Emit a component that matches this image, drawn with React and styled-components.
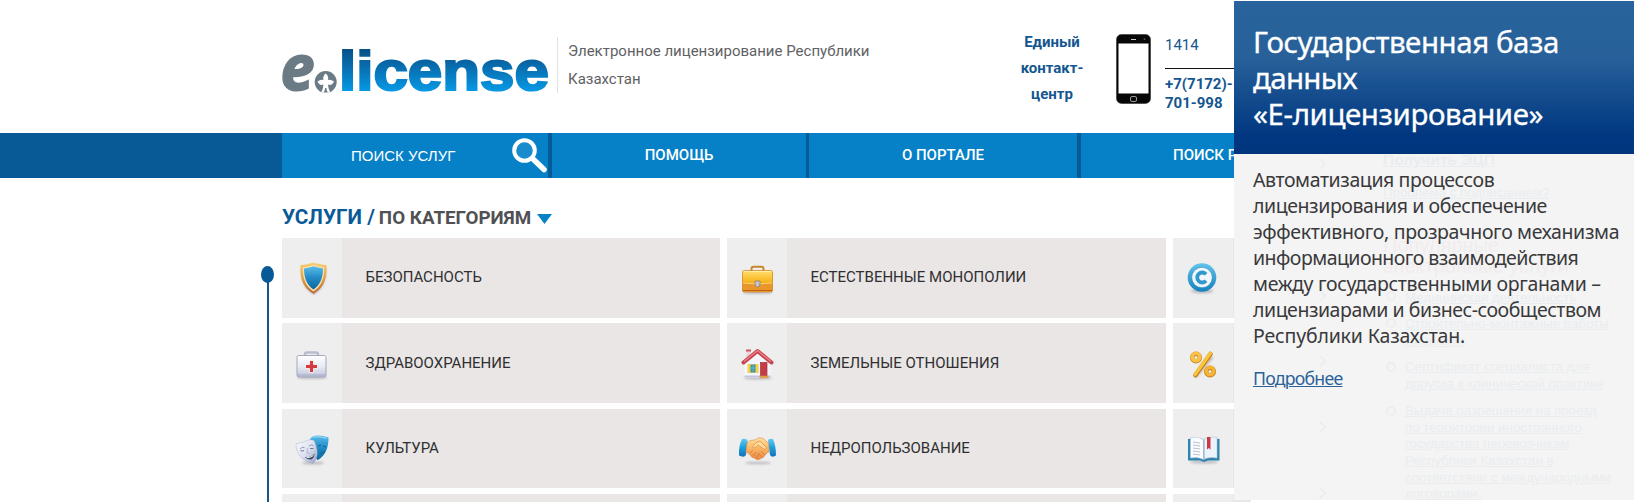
import React from "react";
import styled, { createGlobalStyle } from "styled-components";

const Global = createGlobalStyle`
  * { box-sizing: border-box; }
  html, body { margin: 0; padding: 0; }
  body { background: #fff; overflow: hidden; font-family: Roboto, "Liberation Sans", sans-serif; }
`;

const Page = styled.div`
  position: relative;
  width: 1634px;
  height: 502px;
  overflow: hidden;
  background: #fff;
`;

const Header = styled.header`
  display: flex;
  height: 133px;
  padding-left: 278px;
`;

const LogoSvg = styled.svg`
  flex: none;
  width: 279px;
  height: 60px;
  margin-top: 37px;
  overflow: visible;
`;

const Tagline = styled.p`
  width: 430px;
  height: 56px;
  margin: 37px 0 0;
  padding-left: 10px;
  border-left: 1px solid #e2e2e2;
  color: #616163;
  font-size: 15px;
  line-height: 28px;
`;

const TaglineLine = styled.span`
  display: block;
  white-space: nowrap;
`;

const ContactTitle = styled.div`
  width: 130px;
  margin-top: 29px;
  color: #14568f;
  font-size: 15px;
  font-weight: 700;
  line-height: 26px;
  text-align: center;
`;

const PhoneSvg = styled.svg`
  flex: none;
  width: 35px;
  height: 70px;
  margin: 34px 14px 0 -1px;
`;

const Numbers = styled.div`
  width: 90px;
  margin-top: 27px;
  color: #14568f;
`;

const ShortNumber = styled.div`
  height: 42px;
  border-bottom: 1px solid #111;
  font-size: 15px;
  line-height: 36px;
`;

const LongNumber = styled.div`
  padding-top: 6px;
  font-size: 15px;
  font-weight: 700;
  line-height: 19px;
`;

const Nav = styled.nav`
  display: flex;
  height: 45px;
  padding-left: 282px;
  background: #075a96;
`;

const NavItem = styled.a`
  display: flex;
  flex: none;
  align-items: center;
  justify-content: ${(p) => (p.$start ? "flex-start" : "center")};
  width: ${(p) => p.$width}px;
  margin-right: ${(p) => p.$gap}px;
  padding-left: ${(p) => p.$start || 0}px;
  padding-bottom: 1px;
  background: #0681c8;
  color: #fff;
  font-size: 15px;
  font-weight: 500;
  white-space: nowrap;
`;

const SearchItem = styled(NavItem)`
  padding-bottom: 0;
  padding-left: 69px;
  justify-content: space-between;
  font-family: "Liberation Sans", sans-serif;
  font-weight: 400;
`;

const Lens = styled.svg`
  width: 40px;
  height: 45px;
`;

const Main = styled.main`
  display: flex;
`;

const Timeline = styled.svg`
  flex: none;
  width: 22px;
  height: 324px;
  margin-left: 260px;
`;

const Content = styled.section`
  flex: none;
`;

const Title = styled.h1`
  display: flex;
  align-items: baseline;
  height: 60px;
  margin: 0;
  color: #0b5a98;
  font-size: 20.7px;
  font-weight: 700;
  line-height: 78px;
  white-space: nowrap;
`;

const TitleFilter = styled.span`
  margin-left: 4px;
  color: #505154;
  font-size: 18.8px;
`;

const Arrow = styled.svg`
  width: 15px;
  height: 10px;
  margin-left: 6px;
`;

const Grid = styled.div`
  display: grid;
  grid-template-columns: 438px 439px 78px;
  grid-template-rows: 80px 81px 80px 80px;
  column-gap: 7px;
  row-gap: 5px;
  height: 264px;
  overflow: hidden;
`;

const Card = styled.div`
  display: flex;
  height: ${(p) => p.$h || 80}px;
  background: #e9e6e5;
  overflow: hidden;
`;

const CardIcon = styled.svg`
  flex: none;
  width: 60px;
  height: 80px;
  background: #eee;
`;

const CardLabel = styled.span`
  padding-left: 23.5px;
  color: #2f2f31;
  font-size: 15px;
  line-height: ${(p) => p.$lh || 78}px;
  white-space: nowrap;
`;

const Panel = styled.aside`
  position: absolute;
  top: 1px;
  left: 1234px;
  width: 400px;
  height: 499px;
  overflow: hidden;
  background: #f4f4f4;
  font-family: "Noto Sans", sans-serif;
`;

const PanelTitle = styled.h2`
  height: 153px;
  margin: 0;
  padding: 23px 0 0 19px;
  background: linear-gradient(#28639c 0%, #28619a 36%, #003780 88%, #00357d 100%);
  color: #fff;
  font-size: 29.5px;
  font-weight: 400;
  line-height: 36px;
  -webkit-text-stroke: 0.3px #fff;
`;

const Line = styled.span`
  display: block;
  letter-spacing: ${(p) => p.$ls || 0}px;
  white-space: nowrap;
`;

const PanelBody = styled.div`
  position: relative;
  height: 346px;
`;

const PanelText = styled.p`
  position: relative;
  margin: 0;
  padding: 13px 0 0 19px;
  color: #39393b;
  font-size: 19.5px;
  line-height: 26px;
`;

const More = styled.a`
  position: relative;
  display: inline-block;
  margin: 16px 0 0 19px;
  color: #2a6299;
  font-size: 17.7px;
  line-height: 26px;
  letter-spacing: -0.75px;
  text-decoration: underline;
  text-decoration-thickness: 1px;
`;

const Backdrop = styled.div`
  position: absolute;
  inset: -3px 0 0 0;
  padding: 0 0 0 149px;
  font-family: "Liberation Sans", sans-serif;
  white-space: nowrap;
`;

const FaintLine = styled.div`
  height: ${(p) => p.$h}px;
  padding-left: ${(p) => p.$indent || 0}px;
  color: ${(p) => p.$color || "#eaedf0"};
  font-size: ${(p) => p.$size || 13.3}px;
  font-weight: ${(p) => (p.$bold ? 700 : 400)};
  line-height: 17px;
  text-decoration: ${(p) => (p.$plain ? "none" : "underline")};
`;

const FaintMarks = styled.svg`
  position: absolute;
  top: 0;
  left: 0;
`;

const stops = (id, colors, x2 = 0, y2 = 1) => (
  <linearGradient id={id} x1="0" y1="0" x2={x2} y2={y2}>
    {colors.map((c, i) => (
      <stop key={i} offset={i / (colors.length - 1)} stopColor={c} />
    ))}
  </linearGradient>
);

function Defs() {
  return (
    <defs>
      {stops("gold", ["#ffdf70", "#f8b61d", "#d98511"])}
      {stops("rim", ["#f8cf75", "#e2a041", "#b76a3a"])}
      {stops("sky", ["#58bdeb", "#2289c6", "#0b679e"])}
      {stops("ring", ["#62c4ed", "#1681bd"])}
      {stops("silver", ["#ffffff", "#e8ebf5", "#bfc4d9"])}
      {stops("mask", ["#fbfbff", "#dde2f0", "#94a1c2"], 1, 1)}
      {stops("cuff", ["#68c8f0", "#1aa0dc", "#1b6fb8"])}
      {stops("skin", ["#ffe2a0", "#f9b564", "#e88842"])}
      <filter id="soft" x="-30%" y="-80%" width="160%" height="260%">
        <feGaussianBlur stdDeviation="1.1" />
      </filter>
    </defs>
  );
}

const Shadow = ({ cx, cy, rx, ry = 1.6 }) => (
  <ellipse cx={cx} cy={cy} rx={rx} ry={ry} fill="#8b8b99" opacity=".5" filter="url(#soft)" />
);

const icons = {
  shield: (
    <>
      <path d="M20 29Q31 24 44 29C45 42 41 51 32 57C22 51 18 42 20 29Z" fill="#a9a7b4" opacity=".6" filter="url(#soft)" />
      <path d="M18.500 27C23 27 27 26 31.500 24.500C36 26 40 27 44.500 27C45.500 41 41.500 50 31.500 56C21.500 50 17.500 41 18.500 27Z" fill="url(#rim)" />
      <path d="M20.800 29.200C25 29 28.500 28 31.500 26.800C34.500 28 38 29 42.200 29.200C42.700 40.500 39 48.500 31.500 53.500C24 48.500 20.300 40.500 20.800 29.200Z" fill="#f8dfae" />
      <path d="M22 30.500C26 30 28.500 29.500 31.500 28.300C34.500 29.500 37 30 41 30.500C41 40 38 47 31.500 51.600C25 47 22 40 22 30.500Z" fill="url(#sky)" />
    </>
  ),
  medkit: (
    <>
      <Shadow cx={30} cy={54.5} rx={15} />
      <path d="M23 33V31Q23 29.500 25 29.500H34Q36 29.500 36 31V33" fill="none" stroke="#b9bdcd" strokeWidth="2.400" />
      <rect x="15" y="32.500" width="29" height="21.500" rx="2" fill="url(#silver)" stroke="#9a9fb7" strokeWidth=".9" />
      <path d="M16 33.500H43" stroke="#fff" />
      <path d="M27.500 37.500H31.500V41.500H35.500V45.500H31.500V49.500H27.500V45.500H23.500V41.500H27.500Z" fill="#d23b41" stroke="#fff" strokeWidth=".8" />
      <path d="M15.500 52H43.500" stroke="#a3a9c4" />
    </>
  ),
  masks: (
    <>
      <Shadow cx={31} cy={54} rx={11} />
      <path d="M28 30C31 25 39 26 46.500 28.500C46.500 38 44 46 36 51C29 48 26 39 28 30Z" fill="url(#sky)" />
      <path d="M31 28.500Q36 26.500 44.500 29.500" fill="none" stroke="#a1ddf6" />
      <path d="M36 37L39 36M41 37L44 38M38 45Q41 42 43 43" stroke="#10628f" fill="none" />
      <path d="M14 35C17 33.500 20 34 23 32.500C26 31 29 30 32 31.500C35 38 38 48 31 54.500C22 53 14 46 14 35Z" fill="url(#mask)" stroke="#9aa5c2" strokeWidth=".4" />
      <path d="M18 40Q20 37.500 22.500 38.500M27 37Q29 35 31.500 36.500" fill="none" stroke="#8a94b0" strokeWidth=".9" />
      <path d="M18.500 41.800H22M28 39.500H31.500" fill="none" stroke="#6d7896" strokeWidth="1" />
      <path d="M25.500 39L25 44L27.500 44" fill="none" stroke="#a0abc6" strokeWidth=".7" />
      <path d="M23 48C27 48.500 30 47.500 32.500 44.500C32.500 48 30.500 50.500 28.500 50.500C26 50.500 24 49.500 23 48Z" fill="#384560" />
      <path d="M24.500 48.600Q28.500 49 31.500 46.500" stroke="#fff" strokeWidth=".9" fill="none" />
    </>
  ),
  briefcase: (
    <>
      <Shadow cx={30.5} cy={54.5} rx={15} />
      <path d="M24.500 33V31Q24.500 28.800 26.500 28.800H34.500Q36.500 28.800 36.500 31V33" fill="none" stroke="#c8872a" strokeWidth="2" />
      <rect x="15.500" y="32.500" width="30" height="21.500" rx="1.800" fill="url(#gold)" stroke="#cb7d17" strokeWidth=".7" />
      <path d="M16.500 33.500H44.500" stroke="#fff0a3" />
      <path d="M16 45Q30 47 45 45V52Q45 54 43 54H18Q16 54 16 52Z" fill="#e8962a" />
      <path d="M16 45Q30 47 45 45" fill="none" stroke="#fbd17a" />
      <path d="M16 52.500H45" stroke="#bb6419" />
      <path d="M28 43H33V46Q33 48.700 30.500 49.200Q28 48.700 28 46Z" fill="#c5c4c4" stroke="#83757a" strokeWidth=".7" />
    </>
  ),
  house: (
    <>
      <Shadow cx={31} cy={55} rx={14} />
      <rect x="19.500" y="27" width="4" height="9" fill="#ead4d8" />
      <path d="M19 27.500H24" stroke="#cb5860" strokeWidth="2" />
      <path d="M17.500 40L30.500 28L43.500 40V54.500H17.500Z" fill="#f5f6fb" />
      <path d="M17.500 53.500H43.500" stroke="#c3c7da" strokeWidth="2" />
      <path d="M16.500 39.500L30.500 28L44.500 39.500" fill="none" stroke="#c84451" strokeWidth="4" strokeLinecap="round" strokeLinejoin="round" />
      <path d="M17 38.500L30.500 27.500L44 38.500" fill="none" stroke="#e78388" strokeWidth="1.300" />
      <rect x="20.500" y="41" width="11" height="9" fill="#f4d247" />
      <rect x="23.500" y="41.500" width="5" height="8" fill="#3e94ab" />
      <path d="M26 41.500V49.500M23.500 45H28.500" stroke="#83bdc4" strokeWidth=".7" />
      <rect x="33.500" y="39.500" width="6.500" height="14" fill="#c33d49" stroke="#a9333d" strokeWidth=".7" />
      <path d="M32.500 54H41.500" stroke="#dea04e" strokeWidth="2.500" />
    </>
  ),
  handshake: (
    <>
      <Shadow cx={31} cy={54} rx={13} ry={1.3} />
      <path d="M15 30Q18 29 20.500 31L19 46Q17 49 12 46.500Q11.500 37 15 30Z" fill="url(#cuff)" />
      <path d="M46 30Q43 29 41 31L43 46Q45 49 49 46.500Q49 37 46 30Z" fill="url(#cuff)" />
      <path d="M20 34C23 31 25 31 28 31C31 28 36 28 39 32L41.500 34L42 43C40 43 40 45 38 46C37 49 34 49 33 50C30 52 28 49 27 49C24 49 24 46 23 46C21 45 21 43 19 43Z" fill="url(#skin)" stroke="#dd8548" strokeWidth=".6" />
      <path d="M26 37Q28 33 33 32L40 39Q39 41 37 40L31 36L28 39Q25 39 26 37Z" fill="#ffdc96" stroke="#dc8848" strokeWidth=".7" />
      <path d="M23 44L26 41M26 47L29 43M29 49L32 45M34 42L38 46M31 44L35 48" stroke="#d67b42" strokeWidth=".9" />
    </>
  ),
  copyright: (
    <>
      <Shadow cx={29} cy={53} rx={11} ry={2.5} />
      <circle cx="29" cy="39.500" r="14.300" fill="url(#ring)" />
      <circle cx="29" cy="39.500" r="10.300" fill="#f1f7fb" stroke="#2386bd" strokeWidth=".6" />
      <path d="M33 36.200A5 5 0 1 0 33 42.800" fill="none" stroke="#3098cf" strokeWidth="3.800" />
    </>
  ),
  percent: (
    <>
      <path d="M22 54L39 34" stroke="#977f5c" strokeWidth="3" opacity=".5" filter="url(#soft)" />
      <path d="M22.500 52L37.500 31" stroke="#c67c16" strokeWidth="4.600" strokeLinecap="round" />
      <path d="M22.300 51.300L37.300 30.300" stroke="#fac43d" strokeWidth="3.400" strokeLinecap="round" />
      <circle cx="23" cy="34.500" r="3.800" fill="none" stroke="#c98120" strokeWidth="4.400" />
      <circle cx="23" cy="34" r="3.800" fill="none" stroke="#f9c246" strokeWidth="3.400" />
      <circle cx="37" cy="48.500" r="3.800" fill="none" stroke="#c67817" strokeWidth="4.400" />
      <circle cx="37" cy="48" r="3.800" fill="none" stroke="#f5b434" strokeWidth="3.400" />
    </>
  ),
  book: (
    <>
      <Shadow cx={31} cy={53} rx={14} />
      <path d="M15 30L27 29L31 30.500L35 29L46.500 30V51.500H35L31 53L27 51.500H15Z" fill="#2b84ae" />
      <path d="M17.500 28.500Q25 27 30.500 30.500V50.500Q25 47.500 17.500 49Z" fill="#fafcff" stroke="#b6c6db" strokeWidth=".6" />
      <path d="M44 28.500Q36 27 30.500 30.500V50.500Q36 47.500 44 49Z" fill="#eaf2fa" stroke="#b6c6db" strokeWidth=".6" />
      <path d="M31 30.500V50.500" stroke="#8ca8c5" />
      <path d="M20 33L27 34M20 36L27 37M20 39L27 40M20 42L27 43M20 45L27 46" stroke="#a9afb9" strokeWidth=".8" />
      <path d="M34 28H37.500V40.500L35.800 39L34 40.500Z" fill="#cc3943" />
    </>
  ),
};

const cards = [
  { icon: "shield", label: "БЕЗОПАСНОСТЬ" },
  { icon: "briefcase", label: "ЕСТЕСТВЕННЫЕ МОНОПОЛИИ" },
  { icon: "copyright" },
  { icon: "medkit", label: "ЗДРАВООХРАНЕНИЕ", lh: 80 },
  { icon: "house", label: "ЗЕМЕЛЬНЫЕ ОТНОШЕНИЯ", lh: 80 },
  { icon: "percent" },
  { icon: "masks", label: "КУЛЬТУРА", h: 79 },
  { icon: "handshake", label: "НЕДРОПОЛЬЗОВАНИЕ", h: 79 },
  { icon: "book", h: 79 },
  {},
  {},
  {},
];

function Logo() {
  return (
    <LogoSvg viewBox="278 37 279 60">
      <defs>
        <linearGradient id="word" gradientUnits="userSpaceOnUse" x1="0" y1="49" x2="0" y2="91">
          <stop offset="0" stopColor="#075086" />
          <stop offset=".35" stopColor="#0868a8" />
          <stop offset="1" stopColor="#0798e4" />
        </linearGradient>
        <clipPath id="badge"><rect x="312" y="70" width="28" height="22.500" /></clipPath>
      </defs>
      <text x="280.500" y="90" fontFamily="Open Sans, sans-serif" fontWeight="700" fontStyle="italic" fontSize="63" textLength="34" lengthAdjust="spacingAndGlyphs" fill="#6b7b86" stroke="#6b7b86" strokeWidth="1.800">e</text>
      <g clipPath="url(#badge)">
        <circle cx="325.700" cy="82" r="11" fill="#6b7b86" />
        <path d="M325.700 73.500Q329 76 328 80Q330.500 79 334 81.500Q332 86 328 84.500Q328 88 330 92L328.500 93Q326.500 91 326.300 88H325.100Q325 91 323 93L321.500 92Q323.500 88 323.400 84.500Q319.500 86 317.500 81.500Q321 79 323.400 80Q322.500 76 325.700 73.500Z" fill="#fff" />
      </g>
      <text x="339" y="90" fontFamily="Liberation Sans, sans-serif" fontWeight="700" fontSize="56" textLength="210" lengthAdjust="spacingAndGlyphs" fill="url(#word)" stroke="url(#word)" strokeWidth="2.200">license</text>
    </LogoSvg>
  );
}

function Phone() {
  return (
    <PhoneSvg viewBox="0 0 35 70">
      <rect x=".5" y=".5" width="34" height="69" rx="5" fill="#070707" stroke="#333" strokeWidth=".6" />
      <rect x="2.500" y="9.500" width="30" height="50" fill="#fff" />
      <path d="M15 5.500H20" stroke="#ccc" />
      <circle cx="28.500" cy="5.200" r=".9" fill="#555" />
      <rect x="14.500" y="62.500" width="6" height="5" rx="1.500" fill="none" stroke="#999" />
    </PhoneSvg>
  );
}

const faintItems = [
  ["Получить ЭЦП", 33, 0, 15.5, true],
  ["Проблема с подписанием?", 53, 0, 13.3],
  ["Популярные", 21, 0, 20, false, true],
  ["электронные услуги", 31, 0, 20, false, true],
  ["Медицинская деятельность", 26, 22],
  ["Строительно-монтажные работы", 17, 22],
  ["Лицензия", 26, 22],
  ["Сертификат специалиста для", 17, 22],
  ["допуска к клинической практике", 27, 22],
  ["Выдача разрешения на проезд", 17, 22],
  ["по территории иностранного", 16, 22],
  ["государства перевозчикам", 17, 22],
  ["Республики Казахстан в", 17, 22],
  ["соответствии с международными", 16, 22],
  ["договорами.", 17, 22],
];

export default function App() {
  return (
    <Page>
      <Global />
      <Header>
        <Logo />
        <Tagline>
          <TaglineLine>Электронное лицензирование Республики</TaglineLine>
          <TaglineLine>Казахстан</TaglineLine>
        </Tagline>
        <ContactTitle>Единый<br />контакт-<br />центр</ContactTitle>
        <Phone />
        <Numbers>
          <ShortNumber>1414</ShortNumber>
          <LongNumber>+7(7172)-<br />701-998</LongNumber>
        </Numbers>
      </Header>
      <Nav>
        <SearchItem $width={266} $gap={4}>
          ПОИСК УСЛУГ
          <Lens viewBox="508 133 40 45">
            <path d="M532 158L544 169.500" stroke="#fff" strokeWidth="5.500" strokeLinecap="round" />
            <circle cx="524.500" cy="150.500" r="10.300" fill="#1a8bcd" stroke="#fff" strokeWidth="4" />
          </Lens>
        </SearchItem>
        <NavItem $width={254} $gap={3}>ПОМОЩЬ</NavItem>
        <NavItem $width={268} $gap={4}>О ПОРТАЛЕ</NavItem>
        <NavItem $width={170} $gap={0} $start={92}>ПОИСК Р</NavItem>
      </Nav>
      <Main>
        <Timeline viewBox="260 178 22 324">
          <path d="M268 274V502" stroke="#1b5583" strokeWidth="2" />
          <ellipse cx="267.500" cy="274.500" rx="6.500" ry="8.500" fill="#075a96" />
        </Timeline>
        <Content>
          <Title>
            УСЛУГИ /
            <TitleFilter>ПО КАТЕГОРИЯМ</TitleFilter>
            <Arrow viewBox="0 0 15 10"><path d="M0 0H15L7.500 10Z" fill="#0681c8" /></Arrow>
          </Title>
          <Grid>
            {cards.map((c, i) => (
              <Card key={i} $h={c.h}>
                <CardIcon viewBox="0 0 60 80">
                  {i === 0 && <Defs />}
                  {icons[c.icon]}
                </CardIcon>
                {c.label && <CardLabel $lh={c.lh}>{c.label}</CardLabel>}
              </Card>
            ))}
          </Grid>
        </Content>
      </Main>
      <Panel>
        <PanelTitle>
          <Line $ls={-0.45}>Государственная база</Line>
          <Line $ls={-0.7}>данных</Line>
          <Line $ls={-0.43}>«Е-лицензирование»</Line>
        </PanelTitle>
        <PanelBody>
          <Backdrop aria-hidden="true">
            {faintItems.map(([text, h, indent, size, bold, plain]) => (
              <FaintLine key={text} $h={h} $indent={indent} $size={size} $bold={bold} $plain={plain} $color={plain ? "#f1eced" : undefined}>
                {text}
              </FaintLine>
            ))}
          </Backdrop>
          <FaintMarks width="400" height="346" fill="none" stroke="#ebedef" strokeWidth="2">
            {[10, 142, 207, 273, 339].map((y) => (
              <path key={y} d={`M86 ${y - 5}L91 ${y}L86 ${y + 5}`} />
            ))}
            {[142, 169, 213, 257].map((y) => (
              <circle key={y} cx="157" cy={y} r="4" />
            ))}
          </FaintMarks>
          <PanelText>
            <Line $ls={-0.4}>Автоматизация процессов</Line>
            <Line $ls={-0.42}>лицензирования и обеспечение</Line>
            <Line $ls={-0.34}>эффективного, прозрачного механизма</Line>
            <Line $ls={-0.54}>информационного взаимодействия</Line>
            <Line $ls={-0.34}>между государственными органами –</Line>
            <Line $ls={-0.46}>лицензиарами и бизнес-сообществом</Line>
            <Line $ls={-0.16}>Республики Казахстан.</Line>
          </PanelText>
          <More>Подробнее</More>
        </PanelBody>
      </Panel>
    </Page>
  );
}
